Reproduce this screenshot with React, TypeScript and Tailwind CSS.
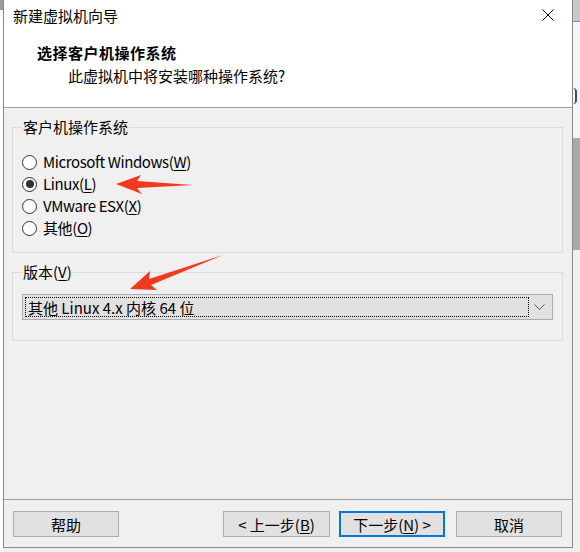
import React from "react";

const font = { fontFamily: '"Noto Sans CJK SC", "Noto Sans", sans-serif' };

const Key: React.FC<{ k: string }> = ({ k }) => (
  <>
    (<span className="underline underline-offset-2">{k}</span>)
  </>
);

const Radio: React.FC<{ checked?: boolean; children: React.ReactNode }> = ({ checked, children }) => (
  <div className="flex h-[22px] items-center gap-[6px]">
    <span className="flex h-[15px] w-[15px] shrink-0 items-center justify-center rounded-full border border-[#333] bg-white">
      {checked && <span className="h-[8px] w-[8px] rounded-full bg-[#333]" />}
    </span>
    <span className="leading-[22px] tracking-[-0.4px]">{children}</span>
  </div>
);

const Btn: React.FC<{ primary?: boolean; className?: string; children: React.ReactNode }> = ({ primary, className, children }) => (
  <button
    className={
      "flex h-[26px] w-[106px] items-center justify-center bg-[#e1e1e1] text-[15px] leading-none text-black " +
      (primary ? "border-2 border-[#0078d7] " : "border border-[#adadad] ") +
      (className ?? "")
    }
  >
    {children}
  </button>
);

export default function App() {
  return (
    <div className="relative flex h-[552px] w-[580px] overflow-hidden bg-[#f0f0f0] text-black" style={font}>
      {/* background window, left sliver */}
      <div className="flex w-[3px] flex-col bg-white">
        <div className="h-[10px] bg-[#9a9a9a]" />
      </div>

      {/* dialog */}
      <div className="flex h-[548px] w-[570px] flex-col border-x border-b border-[#8a8a8a] bg-[#f0f0f0]">
        <div className="flex h-[108px] flex-col border-b border-[#a0a0a0] bg-white">
          <div className="flex h-[30px] items-center justify-between pl-[9px] pr-[18px]">
            <span className="text-[15px] leading-none">新建虚拟机向导</span>
            <svg width="12" height="12" viewBox="0 0 12 12">
              <path d="M0.5 0.5 L11.5 11.5 M11.5 0.5 L0.5 11.5" stroke="#000" strokeWidth="1" />
            </svg>
          </div>
          <div className="pl-[33px] pt-[13px] text-[15px] font-bold leading-[20px] tracking-[0.5px]">选择客户机操作系统</div>
          <div className="pl-[64px] pt-[3px] text-[15px] leading-[20px]">此虚拟机中将安装哪种操作系统?</div>
        </div>

        <div className="flex flex-1 flex-col pl-[8px] pr-[9px]">
          <fieldset className="mt-[9px] border border-[#dcdcdc] px-[9px] pb-[13px]">
            <legend className="px-[1px] text-[15px] leading-[20px]">客户机操作系统</legend>
            <div className="mt-[14px] flex flex-col text-[15px]">
              <Radio>
                Microsoft Windows<Key k="W" />
              </Radio>
              <Radio checked>
                Linux<Key k="L" />
              </Radio>
              <Radio>
                VMware ESX<Key k="X" />
              </Radio>
              <Radio>
                其他<Key k="O" />
              </Radio>
            </div>
          </fieldset>

          <fieldset className="mt-[9px] border border-[#dcdcdc] px-[9px] pb-[20px]">
            <legend className="px-[1px] text-[15px] leading-[20px]">
              版本<Key k="V" />
            </legend>
            <div className="mt-[12px] flex h-[26px] items-center border border-[#adadad] bg-[#e1e1e1] p-[2px]">
              <div className="flex h-[20px] w-[504px] items-center border border-dotted border-black pl-[2px] text-[15px] leading-none">
                其他 Linux 4.x 内核 64 位
              </div>
              <div className="flex flex-1 items-center justify-center">
                <svg width="11" height="7" viewBox="0 0 11 7">
                  <path d="M0.5 0.5 L5.5 5.5 L10.5 0.5" fill="none" stroke="#555" strokeWidth="1" />
                </svg>
              </div>
            </div>
          </fieldset>
        </div>

        <div className="flex h-[48px] items-start border-t border-[#a0a0a0] pl-[9px] pr-[10px] pt-[11px]">
          <Btn>帮助</Btn>
          <div className="flex-1" />
          <Btn className="w-[107px]">
            &lt; 上一步<Key k="B" />
          </Btn>
          <Btn primary className="ml-[9px]">
            下一步<Key k="N" /> &gt;
          </Btn>
          <Btn className="ml-[11px]">取消</Btn>
        </div>
      </div>

      {/* background window, right sliver */}
      <div className="flex flex-1 flex-col">
        <div className="h-[21px] bg-[#c8c8c8]" />
        <div className="h-[1px] bg-[#5b9bd5]" />
        <div className="flex h-[116px] items-start bg-[#f4f4f4] pt-[66px]">
          <div className="h-[16px] w-[4px] rounded-r-full border-r-2 border-[#2b4f9a]" />
        </div>
        <div className="h-[112px] bg-[#a9a9a9]" />
        <div className="flex-1 bg-[#f0f0f0]" />
      </div>

      {/* red annotation arrows */}
      <svg className="pointer-events-none absolute left-0 top-0" width="580" height="552">
        <polygon points="116,184 141,175 137,181 193,185 137,188 142,194" fill="#f2391d" />
        <polygon points="130,289 150,271 149,279 223,255 151,285 157,290" fill="#f2391d" />
      </svg>
    </div>
  );
}
